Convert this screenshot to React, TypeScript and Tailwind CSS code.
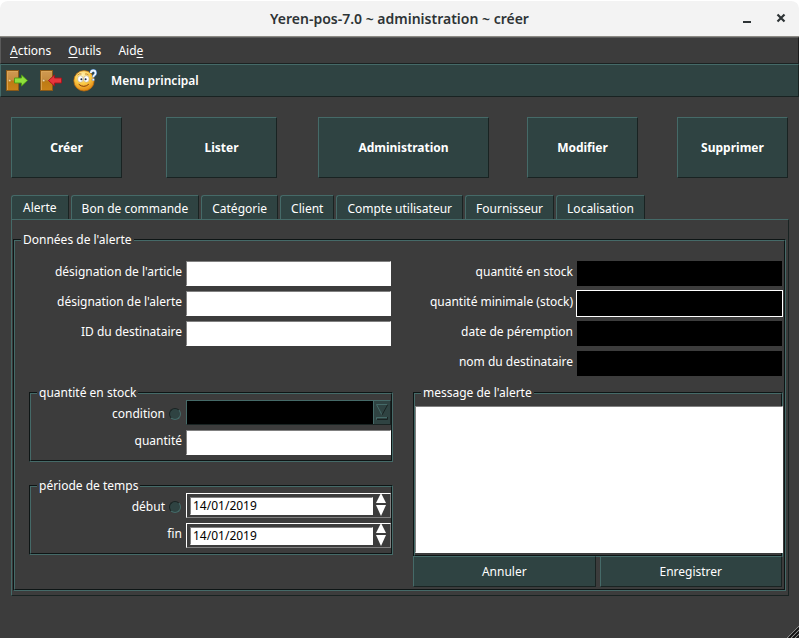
import type { ReactNode } from 'react';

const raised =
  'border border-t-[#456a68] border-l-[#456a68] border-r-[#192322] border-b-[#192322] bg-[#2f4342]';
const sunkenWhite =
  'border border-t-[#808080] border-l-[#808080] border-r-white border-b-white bg-white text-black';
const label = 'shrink-0 text-right leading-[22px] whitespace-nowrap';

function Door({ enter }: { enter?: boolean }) {
  return (
    <svg className="h-6 w-6" viewBox="0 0 24 24" aria-hidden="true">
      <defs>
        <linearGradient id="wood" x1="0" y1="0" x2="0" y2="1">
          <stop offset="0" stopColor="#cf9a54" />
          <stop offset="0.45" stopColor="#c68d40" />
          <stop offset="0.55" stopColor="#bd7a14" />
          <stop offset="1" stopColor="#c98218" />
        </linearGradient>
      </defs>
      <rect x="1.5" y="1.5" width="12" height="20" fill="url(#wood)" stroke="#8a5a18" />
      <path d="M2.500 21V2.500H13" fill="none" stroke="#dda95c" strokeWidth="0.8" />
      <circle cx="4.700" cy="11.500" r="1.200" fill="#f2d9a8" stroke="#9a6a24" strokeWidth="0.500" />
      {enter ? (
        <path d="M9.500 11.500l6-5.500v3h7v5h-7v3z" fill="#e8353c" stroke="#a5141c" strokeWidth="0.900" strokeLinejoin="round" />
      ) : (
        <path d="M22.500 11.500l-6-5.500v3h-7v5h7v3z" fill="#8fe03c" stroke="#4d9a14" strokeWidth="0.900" strokeLinejoin="round" />
      )}
    </svg>
  );
}

function Smiley() {
  return (
    <svg className="h-6 w-6" viewBox="0 0 24 24" aria-hidden="true">
      <defs>
        <radialGradient id="face" cx="0.42" cy="0.25" r="0.8">
          <stop offset="0" stopColor="#fff3b8" />
          <stop offset="0.5" stopColor="#fbc944" />
          <stop offset="1" stopColor="#dc7c0a" />
        </radialGradient>
      </defs>
      <circle cx="11" cy="11.800" r="10.200" fill="url(#face)" stroke="#c06c08" strokeWidth="0.700" />
      <path d="M4.500 6.200q2-2 4-1.200M12 5q2-.5 3.500 1" fill="none" stroke="#b8741c" strokeWidth="0.800" />
      <ellipse cx="7.400" cy="10" rx="2.700" ry="3.200" fill="#fff" stroke="#9b8a6a" strokeWidth="0.400" />
      <ellipse cx="13.400" cy="10" rx="2.700" ry="3.200" fill="#fff" stroke="#9b8a6a" strokeWidth="0.400" />
      <circle cx="8.400" cy="10.300" r="1" fill="#1c2c44" />
      <circle cx="12.600" cy="10.300" r="1" fill="#1c2c44" />
      <path d="M6 15.500q4.800 4 9.500 0" fill="none" stroke="#8a3c08" strokeWidth="1" strokeLinecap="round" />
      <path d="M17.800 4q.3-2.500 2.500-2.500T22.600 4q0 1.500-1.300 2.200-1 .6-1 2M20.300 9.800v1.700" fill="none" stroke="#3f74b4" strokeWidth="2.900" />
      <path d="M17.800 4q.3-2.500 2.500-2.500T22.600 4q0 1.500-1.300 2.200-1 .6-1 2M20.300 9.800v1.700" fill="none" stroke="#eef6fd" strokeWidth="1.800" />
    </svg>
  );
}

function Group({ title, className = '', children }: { title: string; className?: string; children: ReactNode }) {
  return (
    <fieldset className={`min-w-0 border-2 border-[#456a68] [border-style:groove] ${className}`}>
      <legend className="ml-1.5 px-0.5 leading-[14px]">{title}</legend>
      {children}
    </fieldset>
  );
}

function Field({ id, text }: { id: string; text: string }) {
  return (
    <div className="flex h-[26px] items-start gap-1">
      <label htmlFor={id} className={`w-[151px] ${label}`}>{text}</label>
      <input id={id} className={`h-[25px] min-w-0 flex-1 px-1 outline-none ${sunkenWhite}`} />
    </div>
  );
}

function DarkField({ id, text, focused }: { id: string; text: string; focused?: boolean }) {
  return (
    <div className="flex h-[26px] items-start gap-1">
      <label htmlFor={id} className={`w-40 ${label}`}>{text}</label>
      <input
        id={id}
        className={`h-[25px] min-w-0 flex-1 bg-black px-1 text-white outline-none ${focused ? 'ring-1 ring-white' : ''}`}
      />
    </div>
  );
}

function Radio({ name }: { name: string }) {
  return (
    <input
      type="radio"
      name="critere"
      aria-label={name}
      className="mr-px h-3 w-3 appearance-none rounded-full border border-t-[#192322] border-l-[#192322] border-r-[#456a68] border-b-[#456a68] bg-[#2f4342]"
    />
  );
}

function RadioLabel({ id, text }: { id: string; text: string }) {
  return (
    <div className="flex w-[151px] shrink-0 items-center justify-end gap-1 pt-1">
      <label htmlFor={id} className="leading-5">{text}</label>
      <Radio name={text} />
    </div>
  );
}

function DateField({ id, text, radio }: { id: string; text: string; radio?: boolean }) {
  return (
    <div className="flex h-[26px] items-start gap-1">
      {radio ? <RadioLabel id={id} text={text} /> : <label htmlFor={id} className={`w-[151px] ${label}`}>{text}</label>}
      <div className="flex h-[25px] min-w-0 flex-1 gap-px border border-t-white border-l-white border-r-[#808080] border-b-[#808080] p-[3px] pr-0.5">
        <input id={id} defaultValue="14/01/2019" className={`h-[18px] min-w-0 flex-1 px-0.5 outline-none ${sunkenWhite}`} />
        <div className="-mt-1 flex w-3.5 flex-col items-center gap-px">
          <button aria-label={`${text} : augmenter`} className="h-[11px]">
            <svg className="h-[11px] w-2.5" viewBox="0 0 10 11"><path d="M5 0L10 10H0z" fill="#fff" /></svg>
          </button>
          <button aria-label={`${text} : diminuer`} className="h-[11px]">
            <svg className="h-[11px] w-2.5" viewBox="0 0 10 11"><path d="M0 0H10L5 11z" fill="#fff" /></svg>
          </button>
        </div>
      </div>
    </div>
  );
}

const tabs = [
  'Alerte',
  'Bon de commande',
  'Catégorie',
  'Client',
  'Compte utilisateur',
  'Fournisseur',
  'Localisation',
];
const actions = ['Créer', 'Lister', 'Administration', 'Modifier', 'Supprimer'];
const columns = ['col-start-1', 'col-start-3', 'col-start-5', 'col-start-7', 'col-start-9'];

export default function App() {
  return (
    <div className="relative flex min-h-screen flex-col bg-[#3c3c3c] font-['Noto_Sans','Open_Sans',sans-serif] text-[12px] text-white">
      <div className="bg-white">
        <header className="grid h-[37px] grid-cols-[1fr_auto_1fr] items-center rounded-t-lg border-t border-b border-t-white border-b-[#8c8a84] bg-[#f3f3f3] text-[#2e3436]">
          <h1 className="col-start-2 text-[14px] font-semibold">Yeren-pos-7.0 ~ administration ~ créer</h1>
          <div className="flex justify-end gap-[18px] pr-2.5">
            <button aria-label="Réduire">
              <svg className="h-4 w-4" viewBox="0 0 16 16"><path d="M4 10h8v2H4z" fill="#2e3436" /></svg>
            </button>
            <button aria-label="Fermer">
              <svg className="h-4 w-4" viewBox="0 0 16 16"><path d="M4.500 3.500l7 7M11.500 3.500l-7 7" stroke="#2e3436" strokeWidth="2.200" /></svg>
            </button>
          </div>
        </header>
      </div>

      <nav className="flex h-[27px] items-center gap-[17px] border border-t-[#5a5a5a] border-l-[#5a5a5a] border-r-[#1c1c1c] border-b-[#1c2222] px-[9px] leading-4">
        <button><span className="underline underline-offset-2">A</span>ctions</button>
        <button><span className="underline underline-offset-2">O</span>utils</button>
        <button>Aid<span className="underline underline-offset-2">e</span></button>
      </nav>

      <div className={`flex h-[33px] items-center gap-2.5 px-1 ${raised}`}>
        <button aria-label="Sortir"><Door /></button>
        <button aria-label="Entrer"><Door enter /></button>
        <button aria-label="Aide"><Smiley /></button>
        <span className="ml-1 font-semibold">Menu principal</span>
      </div>

      <main className="px-[11px] pt-5 pr-2.5">
        <div className="mr-px grid grid-cols-[111px_44fr_111px_41fr_171px_38fr_111px_39fr_111px]">
          {actions.map((a, i) => (
            <button key={a} className={`row-start-1 h-[61px] font-bold ${columns[i]} ${raised}`}>{a}</button>
          ))}
        </div>

        <div role="tablist" className="mt-[17px] flex gap-0.5">
          {tabs.map((t, i) => (
            <button
              key={t}
              role="tab"
              aria-selected={i === 0}
              className={`h-6 rounded-tl-[3px] border border-b-0 border-t-[#456a68] border-l-[#456a68] border-r-[#192322] bg-[#2f4342] whitespace-nowrap ${i === 0 ? 'px-[11px]' : 'px-2.5 pt-0.5'}`}
            >
              {t}
            </button>
          ))}
        </div>

        <section className="border border-t-[#456a68] border-l-[#456a68] border-r-[#192322] border-b-[#192322] pt-[13px] pr-0.5 pb-1 pl-px">
          <Group title="Données de l'alerte" className="pb-0.5">
            <div className="grid grid-cols-[364fr_370fr] gap-5 pt-3.5 pr-px pl-3.5">
              <div>
                <div className="flex flex-col gap-1 px-0.5">
                  <Field id="article" text="désignation de l'article" />
                  <Field id="alerte" text="désignation de l'alerte" />
                  <Field id="destinataire" text="ID du destinataire" />
                </div>

                <Group title="quantité en stock" className="mt-[39px] pb-1">
                  <div className="flex flex-col gap-1">
                    <div className="flex h-[26px] items-start gap-1">
                      <RadioLabel id="condition" text="condition" />
                      <div className="relative h-[25px] min-w-0 flex-1">
                        <select
                          id="condition"
                          className="h-full w-full appearance-none border border-t-[#456a68] border-l-[#456a68] border-r-[#192322] border-b-[#192322] bg-black px-1 outline-none"
                        >
                          <option></option>
                        </select>
                        <div className="pointer-events-none absolute inset-y-px right-px w-[17px] border-l border-[#456a68] bg-[#2f4342]">
                          <svg className="h-full w-full" viewBox="0 0 16 23" fill="none">
                            <path d="M8 14L2.500 3.500H13" stroke="#456a68" />
                            <path d="M13.500 4L8 14" stroke="#192322" />
                            <path d="M2.500 18.500V16.500H13" stroke="#456a68" />
                            <path d="M3 18.500H13.500V16" stroke="#192322" />
                          </svg>
                        </div>
                      </div>
                    </div>
                    <Field id="quantite" text="quantité" />
                  </div>
                </Group>

                <Group title="période de temps" className="mt-[17px] pb-1">
                  <div className="flex flex-col gap-1">
                    <DateField id="debut" text="début" radio />
                    <DateField id="fin" text="fin" />
                  </div>
                </Group>
              </div>

              <div>
                <div className="flex flex-col gap-1 pr-px">
                  <DarkField id="stock" text="quantité en stock" />
                  <DarkField id="minimum" text="quantité minimale (stock)" focused />
                  <DarkField id="peremption" text="date de péremption" />
                  <DarkField id="nom" text="nom du destinataire" />
                </div>

                <Group title="message de l'alerte" className="mt-[9px] pb-0.5">
                  <div className="-mr-0.5 pt-1.5">
                    <textarea
                      aria-label="message de l'alerte"
                      className={`block h-[147px] w-full resize-none p-1 outline-none ${sunkenWhite}`}
                    />
                  </div>
                </Group>

                <div className="-mt-px grid grid-cols-2 gap-1 pr-px">
                  <button className={`h-[31px] ${raised}`}>Annuler</button>
                  <button className={`h-[31px] ${raised}`}>Enregistrer</button>
                </div>
              </div>
            </div>
          </Group>
        </section>
      </main>

      <svg className="absolute right-0 bottom-0 h-3.5 w-3.5" viewBox="0 0 14 14" aria-hidden="true">
        <path d="M2 14L14 2M6 14L14 6M10 14L14 10" stroke="#8a8a8a" />
        <path d="M4 14L14 4M8 14L14 8M12 14L14 12" stroke="#101010" strokeWidth="1.500" />
      </svg>
    </div>
  );
}
